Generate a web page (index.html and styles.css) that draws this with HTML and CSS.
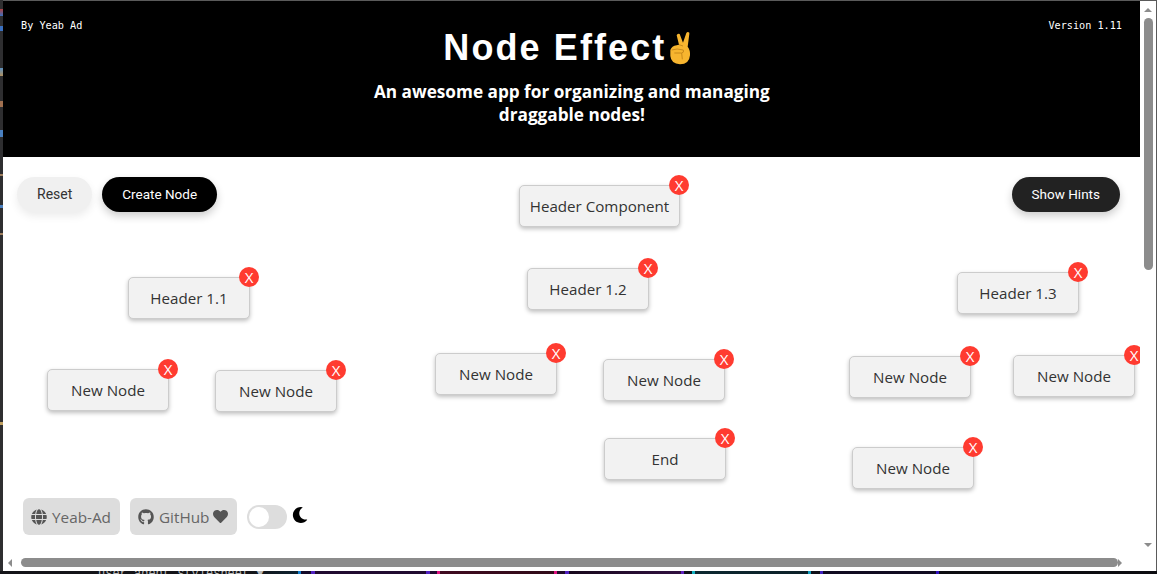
FILE: index.html
```html
<!DOCTYPE html>
<html lang="en">
<head>
    <meta charset="UTF-8">
    <meta name="viewport" content="width=device-width, initial-scale=1.0">
    <title>Node Effect</title>
    <link rel="stylesheet" href="styles.css">
</head>
<body>
    <div class="window">
        <div class="app">
            <header class="header">
                <span class="byline">By Yeab Ad</span>
                <div class="header-center">
                    <h1>Node Effect<svg class="victory" viewBox="30 15 70 105" aria-hidden="true"><path fill="#f7b52f" d="M55 28Q57 21 64 24L74 50 84 21Q88 15 93 20V24L88 62Q96 72 95 88 93 115 65 115 38 113 36 90V72Q40 60 55 58L62 56Z"/><path fill="none" stroke="#c98a1b" stroke-width="3" d="M40 72Q55 66 75 72 78 80 70 81H48M70 81 72 100M62 56 74 60"/></svg></h1>
                    <p class="tagline">An awesome app for organizing and managing draggable nodes!</p>
                </div>
                <span class="version">Version 1.11</span>
            </header>

            <main class="canvas">
                <div class="toolbar">
                    <div class="toolbar-left">
                        <button class="btn btn-reset">Reset</button>
                        <button class="btn btn-create">Create Node</button>
                    </div>
                    <button class="btn btn-hints">Show Hints</button>
                </div>

                <div class="node node-root">Header Component<span class="close">X</span></div>
                <div class="node node-h1">Header 1.1<span class="close">X</span></div>
                <div class="node node-h2">Header 1.2<span class="close">X</span></div>
                <div class="node node-h3">Header 1.3<span class="close">X</span></div>
                <div class="node node-a">New Node<span class="close">X</span></div>
                <div class="node node-b">New Node<span class="close">X</span></div>
                <div class="node node-c">New Node<span class="close">X</span></div>
                <div class="node node-d">New Node<span class="close">X</span></div>
                <div class="node node-e">New Node<span class="close">X</span></div>
                <div class="node node-f">New Node<span class="close">X</span></div>
                <div class="node node-end">End<span class="close">X</span></div>
                <div class="node node-g">New Node<span class="close">X</span></div>

                <div class="footer-links">
                    <a class="link-btn"><svg class="icon" viewBox="0 0 496 512"><path d="M336.500 160C322 70.700 287.800 8 248 8s-74 62.700-88.500 152h177zM152 256c0 22.200 1.200 43.500 3.300 64h185.300c2.100-20.500 3.300-41.800 3.300-64s-1.200-43.500-3.300-64H155.300c-2.100 20.500-3.300 41.800-3.300 64zm324.700-96c-28.600-67.900-86.500-120.400-158-141.600 24.400 33.800 41.200 84.700 50 141.600h108zM177.200 18.400C105.800 39.600 47.800 92.100 19.300 160h108c8.700-56.900 25.500-107.800 49.900-141.600zM487.400 192H372.700c2.100 21 3.300 42.500 3.300 64s-1.200 43-3.300 64h114.600c5.500-20.500 8.600-41.800 8.600-64s-3.100-43.500-8.500-64zM120 256c0-21.500 1.200-43 3.300-64H8.600C3.200 212.500 0 233.800 0 256s3.200 43.500 8.600 64h114.600c-2-21-3.200-42.500-3.200-64zm39.500 96c14.500 89.300 48.700 152 88.500 152s74-62.700 88.500-152h-177zm159.300 141.600c71.400-21.200 129.400-73.700 158-141.600h-108c-8.800 56.900-25.600 107.800-50 141.600zM19.300 352c28.600 67.900 86.500 120.400 158 141.600-24.400-33.800-41.200-84.700-50-141.600h-108z"/></svg>Yeab-Ad</a>
                    <a class="link-btn"><svg class="icon" viewBox="0 0 496 512"><path d="M165.900 397.400c0 2-2.300 3.600-5.200 3.600-3.300 0-5.600-1.600-5.600-3.600 0-2 2.300-3.600 5.200-3.600 3-.3 5.600 1.300 5.600 3.600zm-31.100-4.500c-.7 2 1.300 4.300 4.300 4.900 2.600 1 5.600 0 6.200-2s-1.300-4.300-4.300-5.200c-2.600-.7-5.500.3-6.200 2.300zm44.200-1.700c-2.900.7-4.900 2.600-4.600 4.900.3 2 2.900 3.300 5.900 2.600 2.900-.7 4.900-2.600 4.600-4.600-.3-1.900-3-3.200-5.900-2.900zM244.800 8C106.100 8 0 113.300 0 252c0 110.900 69.800 205.800 169.500 239.200 12.800 2.300 17.300-5.600 17.300-12.100 0-6.200-.3-40.400-.3-61.400 0 0-70 15-84.700-29.800 0 0-11.400-29.100-27.800-36.600 0 0-22.900-15.700 1.600-16 0 0 24.900 2 38.600 25.800 21.900 38.600 58.600 27.500 72.900 20.900 2.300-16 8.800-27.100 16-33.700-55.900-6.200-112.300-14.300-112.300-110.500 0-27.500 7.600-41.300 23.600-58.900-2.600-6.500-11.100-33.300 2.600-67.900 20.900-6.500 69 27 69 27 20-5.600 41.500-8.500 62.800-8.500s42.800 2.900 62.800 8.500c0 0 48.100-33.600 69-27 13.700 34.700 5.200 61.400 2.600 67.900 16 17.700 25.800 31.500 25.800 58.900 0 96.500-58.900 104.200-114.800 110.500 9.200 7.900 17 22.900 17 46.400 0 33.700-.3 75.400-.3 83.600 0 6.500 4.600 14.400 17.300 12.100C428.200 457.800 496 362.900 496 252 496 113.300 383.500 8 244.800 8z"/></svg>GitHub<svg class="icon heart" viewBox="0 0 512 512"><path d="M462.300 62.600C407.500 15.900 326 24.300 275.700 76.200L256 96.500l-19.700-20.300C186.100 24.300 104.500 15.900 49.700 62.600c-62.800 53.600-66.100 149.800-9.900 207.900l193.500 199.800c12.500 12.900 32.800 12.900 45.300 0l193.500-199.800c56.300-58.100 53-154.300-9.800-207.900z"/></svg></a>
                    <div class="toggle"><span class="knob"></span></div>
                    <svg class="moon" viewBox="0 0 512 512"><path d="M283.211 512c78.962 0 151.079-35.925 198.857-94.792 7.068-8.708-.639-21.430-11.562-19.350-124.203 23.654-238.262-71.576-238.262-196.954 0-72.222 38.662-138.635 101.498-174.394 9.686-5.512 7.250-20.197-3.756-22.230A258.156 258.156 0 0 0 283.211 0c-141.309 0-256 114.511-256 256 0 141.309 114.511 256 256 256z"/></svg>
                </div>
            </main>
        </div>

        <div class="scroll-v">
            <span class="arrow arrow-up"></span>
            <span class="thumb-v"></span>
            <span class="arrow arrow-down"></span>
        </div>
        <div class="scroll-h">
            <span class="arrow arrow-left"></span>
            <span class="thumb-h"></span>
            <span class="arrow arrow-right"></span>
        </div>
    </div>
    <div class="devtools-strip">user agent stylesheet ▼</div>
</body>
</html>
```

FILE: styles.css
```css
* {
    box-sizing: border-box;
}
html, body {
    height: 100%;
}
body {
    margin: 0;
    overflow: hidden;
    background-color: #2e2e30;
    background-image: linear-gradient(to bottom,
        #2e2e30 9px, #b04040 9px, #3a70c0 16px, #2e2e30 16px,
        #2e2e30 26px, #3a70c0 26px, #3a70c0 31px, #2e2e30 31px,
        #2e2e30 68px, #5a90c0 68px, #b09060 76px, #2e2e30 76px,
        #2e2e30 101px, #a07050 101px, #a07050 107px, #2e2e30 107px,
        #2e2e30 130px, #4a80c0 130px, #4a80c0 137px, #2e2e30 137px,
        #2e2e30 174px, #a08060 174px, #a08060 176px, #2e2e30 176px,
        #2e2e30 205px, #4a80c0 205px, #4a80c0 208px, #2e2e30 208px,
        #2e2e30 233px, #a08060 233px, #a08060 235px, #2e2e30 235px,
        #2e2e30 422px, #c0a060 422px, #c0a060 425px, #2e2e30 425px);
    font-family: "Open Sans", Arial, sans-serif;
    display: flex;
    flex-direction: column;
}
.window {
    height: 571px;
    margin-left: 3px;
    border-top: 1px solid #5a5a5a;
    border-right: 1px solid #5a5a5a;
    border-bottom: 1px solid #5a5a5a;
    background: #fff;
    display: grid;
    grid-template-columns: 1137px 1fr;
    grid-template-rows: 556px 1fr;
}
.app {
    display: flex;
    flex-direction: column;
    overflow: hidden;
}
.header {
    height: 156px;
    flex-shrink: 0;
    background: #000;
    color: #fff;
    display: flex;
    justify-content: space-between;
    align-items: flex-start;
    padding: 17px 18px 0;
}
.byline, .version {
    font-family: "DejaVu Sans Mono", "Liberation Mono", monospace;
    font-size: 10.200px;
    line-height: 16px;
}
.header-center {
    width: 433px;
    padding-left: 13px;
    text-align: center;
}
h1 {
    margin: 8px 0 0;
    padding-right: 8px;
    font-family: "Liberation Sans", Arial, sans-serif;
    font-size: 36px;
    line-height: 44px;
    letter-spacing: 2.100px;
    display: flex;
    justify-content: center;
    align-items: center;
}
.victory {
    width: 24px;
    height: 35px;
    margin-left: 2px;
}
.tagline {
    margin: 10px 0 0;
    font-size: 17.200px;
    font-weight: 700;
    line-height: 23px;
}

.canvas {
    position: relative;
    flex: 1;
    display: flex;
    flex-direction: column;
    justify-content: space-between;
    padding: 20px 20px 22px 14px;
}
.toolbar {
    display: flex;
    justify-content: space-between;
    align-items: flex-start;
}
.toolbar-left {
    display: flex;
    gap: 10px;
}
.btn {
    height: 35px;
    padding: 0 20px 1px;
    border: none;
    border-radius: 20px;
    font-family: Roboto, Arial, sans-serif;
    font-size: 13.500px;
    font-weight: 400;
    box-shadow: 0 4px 8px rgba(0, 0, 0, 0.2);
}
.btn-reset {
    background: #f0f0f0;
    color: #333;
    font-size: 14px;
    box-shadow: 0 4px 8px rgba(0, 0, 0, 0.08);
}
.btn-create {
    background: #000;
    color: #fff;
}
.btn-hints {
    background: #222;
    color: #fff;
}

.node {
    position: absolute;
    width: 122px;
    height: 42px;
    display: flex;
    align-items: center;
    justify-content: center;
    background: #f2f2f2;
    border: 1px solid #ccc;
    border-radius: 5px;
    box-shadow: 0 2px 4px rgba(0, 0, 0, 0.25);
    color: #333;
    font-size: 15.150px;
}
.close {
    position: absolute;
    top: -11px;
    right: -10px;
    width: 20px;
    height: 20px;
    border-radius: 50%;
    background: #ff3b30;
    color: #fff;
    font-size: 15px;
    line-height: 20px;
    text-align: center;
}
.node-root { left: 516px; top: 28px; width: 161px; }
.node-h1 { left: 125px; top: 120px; }
.node-h2 { left: 524px; top: 111px; }
.node-h3 { left: 954px; top: 115px; }
.node-a { left: 44px; top: 212px; }
.node-b { left: 212px; top: 213px; }
.node-c { left: 432px; top: 196px; }
.node-d { left: 600px; top: 202px; }
.node-e { left: 846px; top: 199px; }
.node-f { left: 1010px; top: 198px; }
.node-end { left: 601px; top: 281px; }
.node-g { left: 849px; top: 290px; }

.footer-links {
    display: flex;
    align-items: center;
    gap: 10px;
    margin-left: 6px;
}
.link-btn {
    height: 37px;
    display: flex;
    align-items: center;
    gap: 5px;
    padding: 0 9px 0 8px;
    background: #ddd;
    border-radius: 6px;
    color: #666;
    font-size: 15.300px;
}
.icon {
    width: 16px;
    height: 16px;
    fill: #555;
}
.heart {
    width: 15px;
    height: 15px;
    margin-left: -1px;
}
.toggle {
    width: 40px;
    height: 24px;
    padding: 2px;
    border-radius: 12px;
    background: #ddd;
}
.knob {
    display: block;
    width: 20px;
    height: 20px;
    border-radius: 50%;
    background: #fff;
}
.moon {
    width: 16px;
    height: 16px;
    margin: -4px 0 0 -5px;
    fill: #000;
}

.scroll-v, .scroll-h {
    display: flex;
    align-items: center;
    background: #fff;
}
.scroll-v {
    flex-direction: column;
    padding: 7px 0 4px;
    justify-content: space-between;
    grid-row: 1 / 3;
    grid-column: 2;
}
.scroll-h {
    padding: 1px 18px 4px 5px;
    justify-content: space-between;
}
.thumb-v {
    width: 9px;
    height: 252px;
    margin: 6px 0 auto;
    border-radius: 5px;
    background: #8c8c8c;
}
.thumb-h {
    width: 1097px;
    height: 9px;
    margin-right: auto;
    margin-left: 9px;
    border-radius: 5px;
    background: #8c8c8c;
}
.arrow {
    width: 0;
    height: 0;
    border-style: solid;
    border-color: transparent;
}
.arrow-up { border-width: 0 4px 4px; border-bottom-color: #8c8c8c; }
.arrow-down { border-width: 4px 4px 0; border-top-color: #8c8c8c; margin-bottom: 20px; }
.arrow-left { border-width: 4px 4px 4px 0; border-right-color: #8c8c8c; }
.arrow-right { border-width: 4px 0 4px 4px; border-left-color: #8c8c8c; }

.devtools-strip {
    height: 3px;
    overflow: hidden;
    padding-left: 98px;
    font-family: "Liberation Mono", monospace;
    font-size: 12px;
    line-height: 6px;
    color: #b8b8b8;
    background-color: #141418;
    background-image: linear-gradient(to right,
        #141418 250px, #0c2230 298px, #1080d0 298px, #1080d0 301px, #140a28 301px,
        #140a28 311px, #5020c0 311px, #5020c0 315px, #200a30 315px,
        #200a30 426px, #5020c0 426px, #5020c0 430px, #200a30 430px,
        #200a30 437px, #e01080 437px, #e01080 440px, #400a20 440px,
        #300a18 554px, #e01080 554px, #e01080 557px, #200a28 557px,
        #200a28 565px, #5020c0 565px, #5020c0 569px, #18081c 569px,
        #301040 681px, #6020c0 681px, #6020c0 684px, #101018 684px,
        #101018 692px, #10b0c0 692px, #10b0c0 695px, #0c2830 695px,
        #0c2028 808px, #10a0c0 808px, #10a0c0 811px, #101018 811px,
        #101018 820px, #4020c0 820px, #4020c0 823px, #100a20 823px,
        #100a20 936px, #3010c0 936px, #3010c0 939px, #0c0c10 939px);
}
```
